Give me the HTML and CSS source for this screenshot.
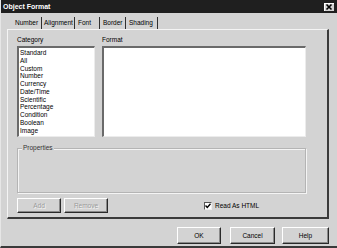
FILE: index.html
```html
<!DOCTYPE html>
<html lang="en">
<head>
    <meta charset="UTF-8"/>
    <title>Object Format</title>
    <link rel="stylesheet" href="styles.css">
</head>
<body>
    <div class="window">
        <div class="titlebar">
            <span class="title">Object Format</span>
            <span class="close">
                <svg width="10" height="8" viewBox="0 0 10 8">
                    <path d="M2.5 1.5 L7.5 6.5 M7.5 1.5 L2.5 6.5" stroke="#000" stroke-width="1.6"/>
                </svg>
            </span>
        </div>

        <div class="tabs">
            <div class="tab active">Number</div>
            <div class="tab">Alignment</div>
            <div class="tab">Font</div>
            <div class="tab">Border</div>
            <div class="tab">Shading</div>
        </div>

        <div class="panel">
            <div class="lists">
                <div class="col category">
                    <div class="label">Category</div>
                    <div class="listbox">
                        <div>Standard</div>
                        <div>All</div>
                        <div>Custom</div>
                        <div>Number</div>
                        <div>Currency</div>
                        <div>Date/Time</div>
                        <div>Scientific</div>
                        <div>Percentage</div>
                        <div>Condition</div>
                        <div>Boolean</div>
                        <div>Image</div>
                    </div>
                </div>
                <div class="col format">
                    <div class="label">Format</div>
                    <div class="listbox"></div>
                </div>
            </div>

            <div class="group">
                <span class="legend">Properties</span>
            </div>

            <div class="actions">
                <button class="btn" disabled>Add</button>
                <button class="btn" disabled>Remove</button>
                <label class="check">
                    <span class="box">
                        <svg width="6" height="6" viewBox="0 0 6 6">
                            <path d="M0.5 2.5 L2.3 4.5 L5.5 0.8" fill="none" stroke="#000" stroke-width="1.4"/>
                        </svg>
                    </span>
                    Read As HTML
                </label>
            </div>
        </div>

        <div class="footer">
            <button class="btn ok">OK</button>
            <button class="btn cancel">Cancel</button>
            <button class="btn help">Help</button>
        </div>
    </div>
</body>
</html>
```

FILE: styles.css
```css
* {
    box-sizing: border-box;
}
body {
    margin: 0;
    width: 337px;
    height: 248px;
    overflow: hidden;
    background-color: #d3d3d3;
    font-family: "Liberation Sans", Arial, sans-serif;
    font-size: 6.5px;
    color: #000;
}
.window {
    width: 337px;
    height: 248px;
    border-left: 1px solid #e6e6e6;
    border-bottom: 2px solid #3a3a3a;
}
.titlebar {
    height: 13px;
    background-color: #1f1f1f;
    display: flex;
    align-items: center;
    justify-content: space-between;
    padding: 0 3px 0 2px;
}
.title {
    color: #fff;
    font-weight: bold;
    font-size: 7px;
}
.close {
    width: 10px;
    height: 8px;
    background-color: #d3d3d3;
    border-top: 1px solid #fff;
    border-left: 1px solid #fff;
    display: flex;
}
.close svg {
    margin: -1px 0 0 -1px;
}
.tabs {
    display: flex;
    margin: 4px 0 0 10px;
    height: 12px;
}
.tab {
    height: 12px;
    line-height: 12px;
    border-right: 1px solid #303030;
    padding-left: 3px;
}
.tab:nth-child(1) { width: 31px; padding-left: 4px; }
.tab:nth-child(2) { width: 33px; padding-left: 2px; }
.tab:nth-child(3) { width: 25px; padding-left: 3px; }
.tab:nth-child(4) { width: 26px; padding-left: 3px; }
.tab:nth-child(5) { width: 32px; padding-left: 3px; }
.panel {
    width: 322px;
    height: 190px;
    margin-left: 6px;
    border-top: 1px solid #f4f4f4;
    border-left: 1px solid #f4f4f4;
    border-right: 2px solid #3a3a3a;
    border-bottom: 2px solid #3a3a3a;
    padding: 6px 0 0 9px;
}
.lists {
    display: flex;
    gap: 7px;
    width: 289px;
}
.col {
    display: flex;
    flex-direction: column;
}
.category {
    width: 78px;
}
.format {
    width: 204px;
}
.label {
    height: 8px;
    line-height: 8px;
    margin-bottom: 2px;
}
.listbox {
    height: 91px;
    background-color: #fff;
    border-top: 2px solid #6a6a6a;
    border-left: 2px solid #6a6a6a;
    border-right: 1px solid #ececec;
    border-bottom: 1px solid #ececec;
    padding: 1px 0 0 1px;
    line-height: 7.75px;
}
.group {
    position: relative;
    width: 289px;
    height: 45px;
    margin-top: 11px;
    border: 1px solid #b4b4b4;
    box-shadow: inset 1px 1px 0 #f4f4f4, 1px 1px 0 #f4f4f4;
}
.legend {
    position: absolute;
    left: 4px;
    top: -5px;
    padding: 0 1px;
    line-height: 8px;
    background-color: #d3d3d3;
    color: #333;
}
.actions {
    display: flex;
    align-items: center;
    gap: 3px;
    margin-top: 5px;
}
.btn {
    font-family: "Liberation Sans", Arial, sans-serif;
    font-size: 6.5px;
    width: 44px;
    height: 15px;
    padding: 0;
    background-color: #d3d3d3;
    color: #000;
    border: 1px solid;
    border-color: #fff #2a2a2a #2a2a2a #fff;
    box-shadow: inset -1px -1px 0 #8a8a8a;
}
.btn:disabled {
    color: #9a9a9a;
    text-shadow: 1px 1px 0 #f4f4f4;
}
.check {
    margin-left: 93px;
    display: flex;
    align-items: center;
    gap: 3px;
}
.box {
    width: 8px;
    height: 8px;
    background-color: #fff;
    border-top: 1px solid #555;
    border-left: 1px solid #555;
    border-right: 1px solid #eee;
    border-bottom: 1px solid #eee;
    display: flex;
    align-items: center;
    justify-content: center;
}
.footer {
    display: flex;
    margin: 8px 0 0 176px;
}
.footer .btn {
    height: 17px;
}
.ok {
    width: 44px;
}
.cancel {
    width: 45px;
    margin-left: 9px;
}
.help {
    width: 47px;
    margin-left: 7px;
}
```
